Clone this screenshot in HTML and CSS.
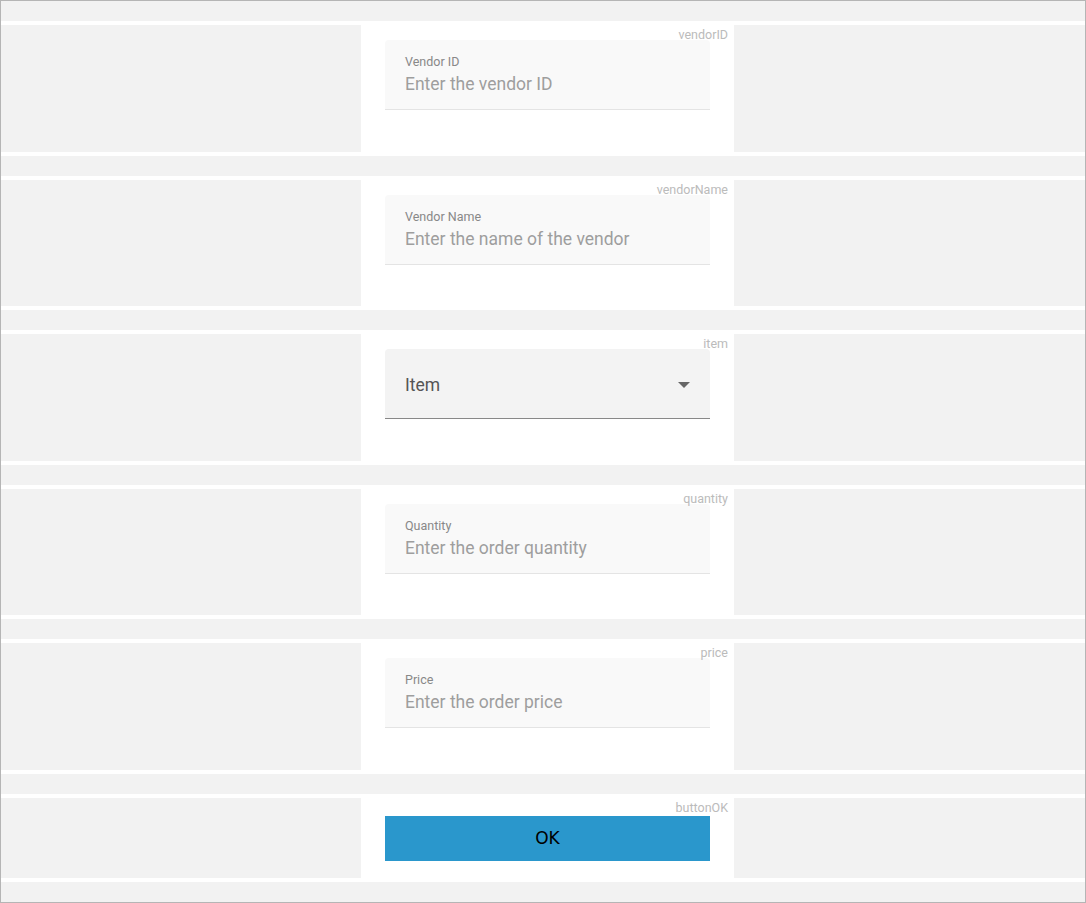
FILE: index.html
```html
<!DOCTYPE html>
<html>
<head>
	<title>New Order</title>
	<link rel="stylesheet" href="styles.css">
	<meta charset="utf-8">
</head>
<body>
	<div class="form">
		<div class="band"></div>

		<div class="row">
			<div class="side"></div>
			<div class="cell">
				<span class="name">vendorID</span>
				<label class="field">
					<span class="field__label">Vendor ID</span>
					<input class="field__input" type="text" placeholder="Enter the vendor ID">
				</label>
			</div>
			<div class="side"></div>
		</div>
		<div class="band"></div>

		<div class="row">
			<div class="side"></div>
			<div class="cell">
				<span class="name">vendorName</span>
				<label class="field">
					<span class="field__label">Vendor Name</span>
					<input class="field__input" type="text" placeholder="Enter the name of the vendor">
				</label>
			</div>
			<div class="side"></div>
		</div>
		<div class="band"></div>

		<div class="row">
			<div class="side"></div>
			<div class="cell">
				<span class="name">item</span>
				<div class="select">
					<span class="select__text">Item</span>
					<svg class="select__arrow" width="12" height="6" viewBox="0 0 12 6"><path d="M0 0h12L6 6z" fill="#666"/></svg>
				</div>
			</div>
			<div class="side"></div>
		</div>
		<div class="band"></div>

		<div class="row">
			<div class="side"></div>
			<div class="cell">
				<span class="name">quantity</span>
				<label class="field">
					<span class="field__label">Quantity</span>
					<input class="field__input" type="text" placeholder="Enter the order quantity">
				</label>
			</div>
			<div class="side"></div>
		</div>
		<div class="band"></div>

		<div class="row">
			<div class="side"></div>
			<div class="cell">
				<span class="name">price</span>
				<label class="field">
					<span class="field__label">Price</span>
					<input class="field__input" type="text" placeholder="Enter the order price">
				</label>
			</div>
			<div class="side"></div>
		</div>
		<div class="band"></div>

		<div class="row row--button">
			<div class="side"></div>
			<div class="cell cell--button">
				<span class="name">buttonOK</span>
				<button class="ok__button">OK</button>
			</div>
			<div class="side"></div>
		</div>
		<div class="band"></div>
	</div>
</body>
</html>
```

FILE: styles.css
```css
* {
	box-sizing: border-box;
	margin: 0;
	padding: 0;
}

body {
	font-family: Roboto, "Liberation Sans", sans-serif;
	background: white;
}

.form {
	width: 1086px;
	height: 903px;
	border: 1px solid #b5b5b5;
	background: white;
	display: flex;
	flex-direction: column;
}

.band {
	height: 20px;
	background: #f2f2f2;
	flex-shrink: 0;
}

.row {
	height: 126.6px;
	margin: 4px 0;
	display: grid;
	grid-template-columns: 360px 373px 1fr;
	flex-shrink: 0;
}

.row--button {
	height: 80px;
}

.side {
	background: #f2f2f2;
}

.cell {
	position: relative;
	padding: 15px 24px 0;
	background: white;
}

.cell--button {
	padding-top: 18px;
}

.name {
	position: absolute;
	top: 2px;
	right: 6px;
	font-size: 12.5px;
	line-height: 15px;
	color: #bbb;
}

.field {
	display: flex;
	flex-direction: column;
	height: 70px;
	padding: 14px 20px 0;
	background: #f9f9f9;
	border-bottom: 1px solid #e4e4e4;
	border-radius: 4px 4px 0 0;
}

.field__label {
	font-size: 12.5px;
	line-height: 16px;
	color: #888;
}

.field__input {
	margin-top: 2px;
	border: none;
	outline: none;
	background: transparent;
	font-family: Roboto, "Liberation Sans", sans-serif;
	font-size: 17.5px;
	line-height: 24px;
	color: #555;
}

.field__input::placeholder {
	color: #9e9e9e;
}

.select {
	display: flex;
	align-items: center;
	justify-content: space-between;
	height: 70px;
	padding: 2px 20px 0;
	background: #f3f3f3;
	border-bottom: 1px solid #888;
	border-radius: 4px 4px 0 0;
}

.select__text {
	font-size: 17.5px;
	color: #555;
}

.ok__button {
	display: block;
	width: 100%;
	height: 45px;
	border: none;
	background: #2a97cc;
	font-family: "DejaVu Sans", sans-serif;
	font-size: 17px;
	color: black;
}
```
